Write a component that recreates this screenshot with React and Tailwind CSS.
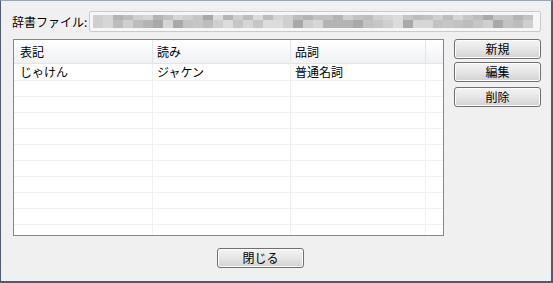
import React from "react";

const FONT = { fontFamily: '"Noto Sans CJK JP", "Noto Sans", sans-serif' };

function mosaicColors(seed, n) {
  const out = [];
  let s = seed;
  const palette = ["#b4b4b4", "#bdbdbd", "#c6c6c6", "#cfcfcf", "#d6d6d6", "#dcdcdc", "#a9a9a9", "#c2c2c2"];
  for (let i = 0; i < n; i++) {
    s = (s * 9301 + 49297) % 233280;
    out.push(palette[Math.floor((s / 233280) * palette.length)]);
  }
  return out;
}

const topRow = mosaicColors(7, 44);
const botRow = mosaicColors(31, 44);

function Btn({ children, className = "" }) {
  return (
    <div
      className={
        "flex h-[20px] w-[87px] items-center justify-center rounded-[3px] border border-[#707070] bg-gradient-to-b from-[#f4f4f4] via-[#e6e6e6] to-[#d2d2d2] text-[12px] leading-none text-black shadow-[inset_0_0_0_1px_#fcfcfc] " +
        className
      }
    >
      {children}
    </div>
  );
}

const rows = [
  ["じゃけん", "ジャケン", "普通名詞"],
  ["", "", ""],
  ["", "", ""],
  ["", "", ""],
  ["", "", ""],
  ["", "", ""],
  ["", "", ""],
  ["", "", ""],
  ["", "", ""],
  ["", "", ""],
];

export default function App() {
  return (
    <div
      style={FONT}
      className="flex h-[283px] w-[553px] flex-col border-t border-l border-r-2 border-b-2 border-t-[#9aa6b4] border-l-[#4d5c70] border-r-[#4d5c70] border-b-[#4d5c70] bg-[#f0f0f0] text-black"
    >
      {/* file row */}
      <div className="mt-[10px] flex h-[21px] items-center pl-[11px] pr-[10px]">
        <div className="w-[77px] text-[12px] leading-none">辞書ファイル:</div>
        <div className="flex h-[21px] flex-1 items-center rounded-[2px] border border-[#c9cbcf] bg-[#f6f6f6] pl-[3px]">
          <div className="flex flex-col">
            <div className="flex h-[5px]">
              {topRow.map((c, i) => (
                <div key={i} className="h-full w-[10px]" style={{ backgroundColor: c }} />
              ))}
            </div>
            <div className="flex h-[8px]">
              {botRow.map((c, i) => (
                <div key={i} className="h-full w-[10px]" style={{ backgroundColor: c }} />
              ))}
            </div>
          </div>
        </div>
      </div>

      {/* table + buttons */}
      <div className="mt-[7px] flex pl-[12px] pr-[10px]">
        <div className="flex h-[197px] w-[431px] flex-col border border-[#828790] bg-white">
          {/* header */}
          <div className="flex h-[24px] border-b border-[#e3e5e8] bg-gradient-to-b from-white to-[#f1f2f4] text-[12px] leading-none">
            <div className="flex w-[139px] items-center border-r border-[#e3e5e8] pl-[6px]">表記</div>
            <div className="flex w-[138px] items-center border-r border-[#e3e5e8] pl-[4px]">読み</div>
            <div className="flex w-[135px] items-center border-r border-[#e3e5e8] pl-[4px]">品詞</div>
            <div className="w-[17px]" />
          </div>
          {rows.map((r, i) => (
            <div
              key={i}
              className={
                "flex border-b border-[#f0f0f0] text-[12px] leading-none " +
                (i === 0 ? "h-[17px]" : "h-[16px]")
              }
            >
              <div className="flex w-[139px] items-center border-r border-[#f0f0f0] pl-[6px]">{r[0]}</div>
              <div className="flex w-[138px] items-center border-r border-[#f0f0f0] pl-[4px]">{r[1]}</div>
              <div className="flex w-[135px] items-center border-r border-[#f0f0f0] pl-[4px]">{r[2]}</div>
              <div className="w-[17px]" />
            </div>
          ))}
          <div className="flex flex-1">
            <div className="w-[139px] border-r border-[#f0f0f0]" />
            <div className="w-[138px] border-r border-[#f0f0f0]" />
            <div className="w-[135px] border-r border-[#f0f0f0]" />
          </div>
        </div>
        <div className="ml-[10px] flex flex-col">
          <Btn>新規</Btn>
          <Btn className="mt-[3px]">編集</Btn>
          <Btn className="mt-[5px]">削除</Btn>
        </div>
      </div>

      {/* close */}
      <div className="mt-[12px] flex pl-[216px]">
        <Btn className="w-[86px]">閉じる</Btn>
      </div>
    </div>
  );
}
